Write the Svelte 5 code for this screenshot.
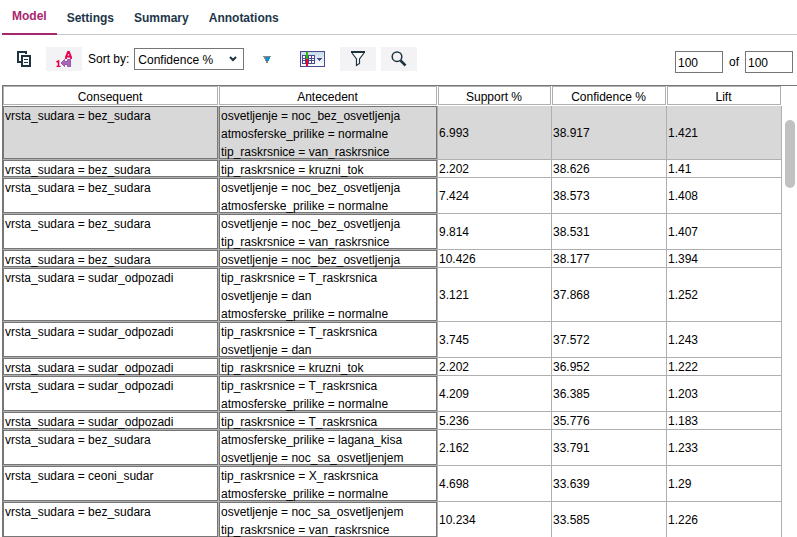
<script>
  const tabs = ['Model', 'Settings', 'Summary', 'Annotations'];
  let active = $state('Model');
  let sortBy = $state('Confidence %');
  let selected = $state(0);

  const bez = 'vrsta_sudara = bez_sudara';
  const odp = 'vrsta_sudara = sudar_odpozadi';
  const noc = 'osvetljenje = noc_bez_osvetljenja';
  const nocSa = 'osvetljenje = noc_sa_osvetljenjem';
  const dan = 'osvetljenje = dan';
  const norm = 'atmosferske_prilike = normalne';
  const van = 'tip_raskrsnice = van_raskrsnice';
  const krug = 'tip_raskrsnice = kruzni_tok';
  const tRas = 'tip_raskrsnice = T_raskrsnica';

  const rules = [
    [bez, [noc, norm, van], '6.993', '38.917', '1.421'],
    [bez, [krug], '2.202', '38.626', '1.41'],
    [bez, [noc, norm], '7.424', '38.573', '1.408'],
    [bez, [noc, van], '9.814', '38.531', '1.407'],
    [bez, [noc], '10.426', '38.177', '1.394'],
    [odp, [tRas, dan, norm], '3.121', '37.868', '1.252'],
    [odp, [tRas, dan], '3.745', '37.572', '1.243'],
    [odp, [krug], '2.202', '36.952', '1.222'],
    [odp, [tRas, norm], '4.209', '36.385', '1.203'],
    [odp, [tRas], '5.236', '35.776', '1.183'],
    [bez, ['atmosferske_prilike = lagana_kisa', nocSa], '2.162', '33.791', '1.233'],
    ['vrsta_sudara = ceoni_sudar', ['tip_raskrsnice = X_raskrsnica', norm], '4.698', '33.639', '1.29'],
    [bez, [nocSa, van], '10.234', '33.585', '1.226']
  ];
</script>

<div class="app">
  <nav class="tabs">
    {#each tabs as tab}
      <button class="tab" class:active={tab === active} onclick={() => (active = tab)}>{tab}</button>
    {/each}
  </nav>

  <div class="toolbar">
    <button class="tool plain" aria-label="Copy">
      <svg width="14" height="16" viewBox="0 0 14 16" fill="none" stroke="#1d3340" stroke-width="2">
        <path d="M4 11H1V1H9V3" />
        <path d="M5 5H13V15H5Z" />
        <path d="M7 8.500H11M7 11.500H11" stroke-width="1" />
      </svg>
    </button>
    <button class="tool" aria-label="Sort order">
      <svg width="16" height="16" viewBox="0 0 16 16" fill="none">
        <path d="M10 8V6L12 1H13L15 6V8M10 5.500H15" stroke="#e6004c" stroke-width="1.800" />
        <path d="M0.500 11L2.500 10V16M0.500 15.500H4.500" stroke="#e6004c" stroke-width="1.600" />
        <path d="M5 12L8.500 8.500V10.500H11.500V8.500H14.500V15.500H11.500V13.500H8.500V15.500Z" fill="#a866ba" stroke="#9459aa" />
      </svg>
    </button>
    <label for="sort">Sort by:</label>
    <div class="select">
      <select id="sort" bind:value={sortBy}>
        <option>Confidence %</option>
        <option>Support %</option>
        <option>Lift</option>
      </select>
      <svg width="8" height="6" viewBox="0 0 8 6" fill="none" stroke="#1d3340" stroke-width="2">
        <path d="M1 1L4 4L7 1" />
      </svg>
    </div>
    <button class="direction" aria-label="Descending">
      <svg width="8" height="7" viewBox="0 0 8 7" shape-rendering="crispEdges">
        <path d="M0 0H8V1H7V3H6V5H5V7H3V5H2V3H1V1H0Z" fill="#858585" />
        <path d="M3 1H7V3H6V5H3Z" fill="#0a8fd0" />
      </svg>
    </button>
    <button class="columns" aria-label="Show or hide columns">
      <svg width="25" height="16" viewBox="0 0 25 16" shape-rendering="crispEdges">
        <defs>
          <linearGradient id="face" x1="0" y1="0" x2="0" y2="1">
            <stop offset="0" stop-color="#c3dbe4" />
            <stop offset="1" stop-color="#fff" />
          </linearGradient>
        </defs>
        <rect x="0.500" y="0.500" width="24" height="15" fill="url(#face)" stroke="#4b4796" />
        <path d="M2 4H15V13H2Z" fill="#4b4796" />
        <path d="M3 5H5V7H3ZM9 5H11V7H9ZM12 5H14V7H12ZM3 8H5V9H3ZM9 8H11V9H9ZM12 8H14V9H12ZM3 10H5V12H3ZM9 10H11V12H9ZM12 10H14V12H12Z" fill="#fff" />
        <rect x="6" y="1" width="2" height="7" fill="#2dbb00" />
        <rect x="6" y="8" width="2" height="7" fill="#f0001c" />
        <path d="M17 7H22V8H21V9H20V10H19V9H18V8H17Z" fill="#4b4796" />
      </svg>
    </button>
    <button class="tool filter" aria-label="Filter">
      <svg width="16" height="16" viewBox="0 0 16 16" fill="none" stroke="#1d3340">
        <path d="M1 1H15" stroke-width="2" />
        <path d="M2 2L6.500 8V14.500L9.500 12.500V8L14 2" fill="#fff" stroke-width="1.200" />
      </svg>
    </button>
    <button class="tool" aria-label="Find">
      <svg width="16" height="16" viewBox="0 0 16 16" fill="none" stroke="#1d3340">
        <circle cx="6" cy="5.700" r="4.800" stroke-width="1.500" />
        <path d="M9.500 9.500L14.500 14.500" stroke-width="2.500" />
      </svg>
    </button>
    <div class="count">
      <input value="100" aria-label="Rules shown" />
      <span>of</span>
      <input value="100" aria-label="Rules in total" />
    </div>
  </div>

  <div class="panel">
    <table>
      <colgroup>
        <col class="consequent" /><col class="antecedent" /><col class="support" /><col class="number" /><col class="number" />
      </colgroup>
      <thead>
        <tr>
          <th>Consequent</th><th>Antecedent</th><th>Support %</th><th>Confidence %</th><th>Lift</th>
        </tr>
      </thead>
      <tbody>
        {#each rules as [consequent, antecedents, support, confidence, lift], i}
          <tr class:selected={i === selected} onclick={() => (selected = i)}>
            <td class="rule"><div class="lines">{consequent}</div></td>
            <td class="rule">
              <div class="lines">
                {#each antecedents as item}<div>{item}</div>{/each}
              </div>
            </td>
            <td>{support}</td>
            <td>{confidence}</td>
            <td>{lift}</td>
          </tr>
        {/each}
      </tbody>
    </table>
    <div class="scrollbar"><div class="thumb"></div></div>
  </div>
</div>

<style>
  :global(body) {
    margin: 0;
    background: #fff;
  }

  .app {
    display: flex;
    flex-direction: column;
    height: 100vh;
    overflow: hidden;
    padding-left: 2px;
    box-sizing: border-box;
    color: #000;
    font: 12px/18px "Liberation Sans", Arial, sans-serif;
  }

  button,
  input,
  select {
    font: inherit;
    color: inherit;
    margin: 0;
    padding: 0;
    border: 0;
    border-radius: 0;
    background: none;
  }

  svg {
    display: block;
  }

  .tabs {
    display: flex;
    flex: none;
    height: 35px;
    box-shadow: inset 0 -1px #c8c8c8;
  }

  .tab {
    padding: 0 10px;
    color: #1d3649;
    font-weight: bold;
  }

  .tab.active {
    padding-bottom: 2px;
    border-bottom: 2px solid #a9266d;
    color: #a9266d;
  }

  .toolbar {
    display: flex;
    flex: none;
    align-items: center;
    height: 50px;
    padding: 0 4px 2px 0;
    box-sizing: border-box;
  }

  .tool {
    display: flex;
    align-items: center;
    justify-content: center;
    width: 36px;
    height: 24px;
    margin-right: 5px;
    background: #f3f3f6;
  }

  .tool.plain {
    margin: 0 4px;
    background: none;
  }

  label {
    margin-left: 1px;
  }

  .select {
    position: relative;
    margin-left: 5px;
  }

  .select select {
    display: block;
    width: 110px;
    height: 22px;
    padding: 1px 0 0 3px;
    border: 1px solid #767676;
    appearance: none;
  }

  .select svg {
    position: absolute;
    top: 8px;
    right: 7px;
    pointer-events: none;
  }

  .direction {
    margin: 0 29px 0 19px;
  }

  .filter {
    margin-left: 15px;
  }

  .count {
    display: flex;
    align-items: center;
    gap: 6px;
    margin: 6px 0 0 auto;
  }

  .count input {
    width: 48px;
    height: 22px;
    padding: 1px 2px 0;
    border: 1px solid #767676;
    box-sizing: border-box;
  }

  .panel {
    display: flex;
    flex: 1;
    min-height: 0;
    border: solid #767676;
    border-width: 1px 0 0 1px;
  }

  table {
    flex: 1;
    align-self: flex-start;
    table-layout: fixed;
    border-spacing: 0;
  }

  .consequent {
    width: 216px;
  }

  .antecedent {
    width: 219px;
  }

  .support {
    width: 114px;
  }

  .number {
    width: 115px;
  }

  th {
    height: 20px;
    padding: 2px 2px 0 0;
    box-sizing: border-box;
    font-weight: normal;
    box-shadow: inset -1px -1px #fff, inset 0 0 0 1px #b0b0b0, inset -2px -2px #b0b0b0;
  }

  td {
    padding: 0 1px;
    vertical-align: middle;
    box-shadow: inset -1px -1px #b0b0b0;
  }

  td.rule {
    padding: 1px 2px 0;
    vertical-align: top;
    box-shadow: inset -1px -1px #b0b0b0, inset 1px 1px #767676, inset -2px -2px #767676;
  }

  .lines {
    margin-bottom: -1px;
  }

  .selected td {
    background: #d8d8d8;
  }

  .scrollbar {
    flex: none;
    width: 15px;
    padding: 34px 2px 0 3px;
    box-sizing: border-box;
  }

  .thumb {
    height: 68px;
    border-radius: 5px;
    background: #c1c1c1;
  }
</style>
